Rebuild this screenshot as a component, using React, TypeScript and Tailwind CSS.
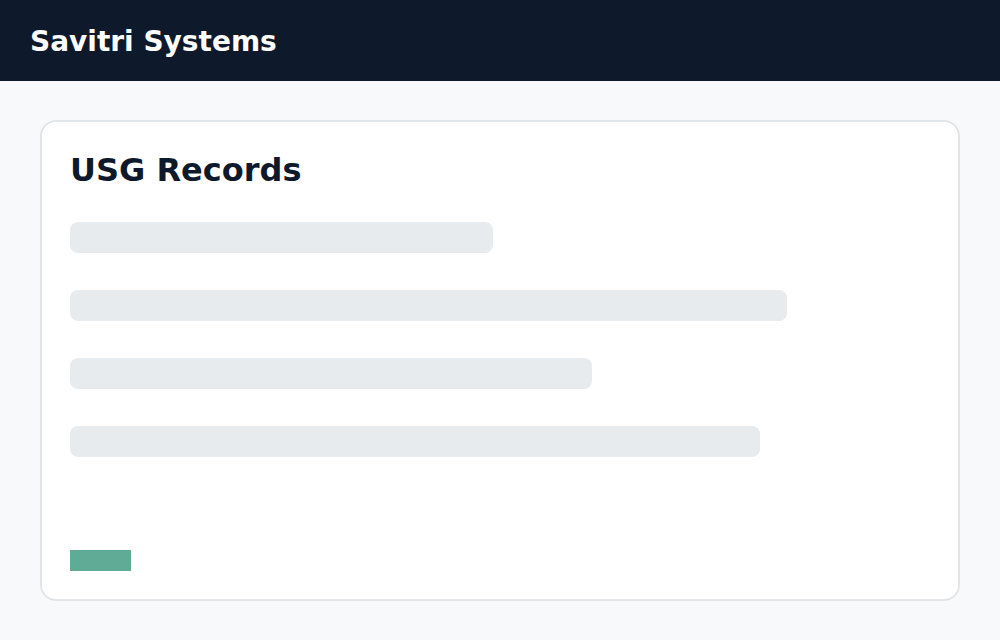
export default function App() {
  const bars = [423, 717, 522, 690];

  return (
    <div className="min-h-screen bg-[#f8f9fb] font-['DejaVu_Sans',sans-serif]">
      <header className="flex h-[81px] items-center bg-[#0e1a2b] px-[30px] pt-[2px]">
        <h1 className="text-[28px] font-bold text-white">Savitri Systems</h1>
      </header>

      <main className="px-[40px] pt-[39px] pb-[40px]">
        <section className="flex h-[481px] flex-col rounded-[16px] border-2 border-[#e2e5e8] bg-white px-[28px] pt-[28px] pb-[28px]">
          <h2 className="text-[32px] leading-[40px] font-bold text-[#0e1a2b]">USG Records</h2>

          <div className="mt-[32px] flex flex-col gap-[37px]">
            {bars.map((w, i) => (
              <div key={i} className="h-[31px] rounded-[8px] bg-[#e8ebee]" style={{ width: w }} />
            ))}
          </div>

          <div className="mt-auto h-[21px] w-[61px] bg-[#5fab96]" />
        </section>
      </main>
    </div>
  );
}
